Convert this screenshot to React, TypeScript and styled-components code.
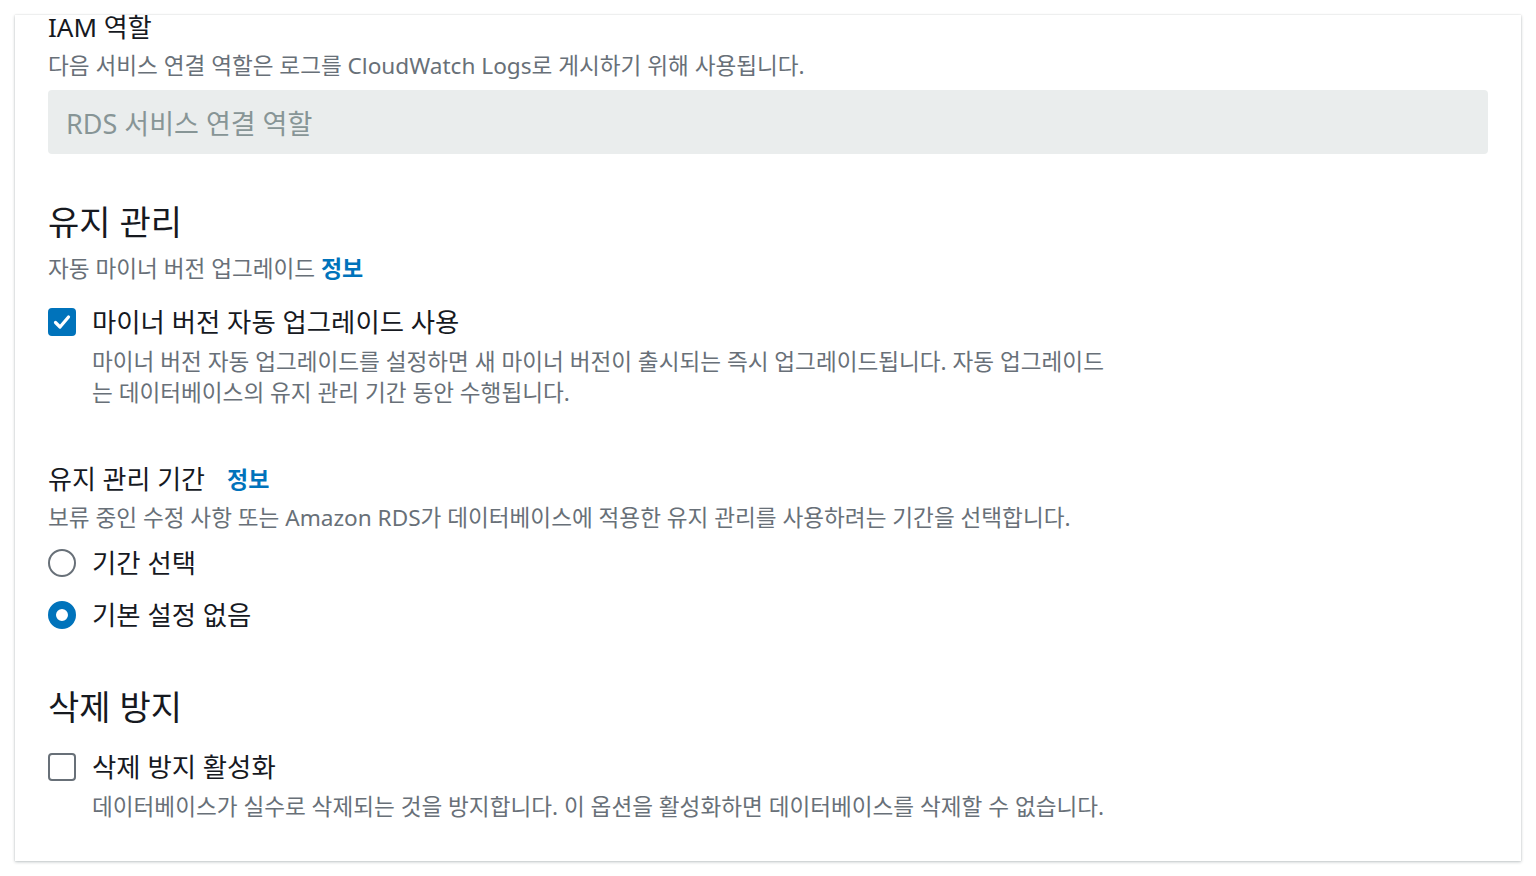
import React from 'react';
import styled, { createGlobalStyle } from 'styled-components';

const GlobalStyle = createGlobalStyle`
  html, body {
    margin: 0;
    padding: 0;
    background: #ffffff;
    font-family: "Noto Sans", "Noto Sans CJK KR", sans-serif;
    color: #16191f;
  }
`;

const Page = styled.div`
  padding: 15px;
  height: 876px;
  box-sizing: border-box;
  overflow: hidden;
`;

const Card = styled.div`
  background: #ffffff;
  box-shadow: 0 1px 3px rgba(0, 28, 36, 0.25), 0 0 1px rgba(0, 28, 36, 0.15);
  padding: 0 33px 36px 33px;
  height: 846px;
  box-sizing: border-box;
  display: flex;
  flex-direction: column;
`;

const Label = styled.div<{ gap?: number }>`
  font-size: 26px;
  line-height: 32px;
  display: flex;
  align-items: center;
  gap: ${(p) => p.gap ?? 8}px;
`;

const Desc = styled.div`
  font-size: 22.6px;
  line-height: 31px;
  color: #687078;
`;

const InfoLink = styled.a`
  color: #0073bb;
  font-weight: 700;
  font-size: 23px;
  text-decoration: none;
`;

const Input = styled.div`
  margin-top: 9px;
  height: 64px;
  background: #eaeded;
  border-radius: 4px;
  display: flex;
  align-items: center;
  padding: 0 18px;
  font-size: 27px;
  color: #879596;
`;

const Heading = styled.h2`
  margin: 0;
  font-size: 34px;
  line-height: 44px;
  font-weight: 400;
`;

const Section = styled.div<{ top: number }>`
  margin-top: ${(p) => p.top}px;
  display: flex;
  flex-direction: column;
`;

const OptionRow = styled.div`
  display: grid;
  grid-template-columns: 28px 1fr;
  column-gap: 16px;
  align-items: center;
`;

const OptionText = styled.div`
  font-size: 26.4px;
  line-height: 32px;
`;

const OptionDesc = styled(Desc)`
  grid-column: 2;
  max-width: 1022px;
`;

const Box = styled.span<{ checked?: boolean }>`
  width: 28px;
  height: 28px;
  box-sizing: border-box;
  border-radius: 4px;
  border: 2px solid ${(p) => (p.checked ? '#0073bb' : '#687078')};
  background: ${(p) => (p.checked ? '#0073bb' : '#ffffff')};
  display: flex;
  align-items: center;
  justify-content: center;
`;

const Radio = styled.span<{ checked?: boolean }>`
  width: 28px;
  height: 28px;
  box-sizing: border-box;
  border-radius: 50%;
  border: ${(p) => (p.checked ? '8px solid #0073bb' : '2px solid #687078')};
  background: #ffffff;
`;

const Checkbox = ({ checked }: { checked?: boolean }) => (
  <Box checked={checked}>
    {checked && (
      <svg width="20" height="20" viewBox="0 0 20 20">
        <path d="M3.5 10.5 L8 15 L16.5 5" fill="none" stroke="#fff" strokeWidth="3.2" strokeLinecap="round" strokeLinejoin="round" />
      </svg>
    )}
  </Box>
);

const App = () => (
  <Page>
    <GlobalStyle />
    <Card>
      <Section top={-4}>
        <Label>IAM 역할</Label>
        <Desc style={{ marginTop: 7 }}>다음 서비스 연결 역할은 로그를 CloudWatch Logs로 게시하기 위해 사용됩니다.</Desc>
        <Input>RDS 서비스 연결 역할</Input>
      </Section>

      <Section top={46}>
        <Heading>유지 관리</Heading>
        <Desc style={{ marginTop: 9 }}>
          자동 마이너 버전 업그레이드 <InfoLink href="#">정보</InfoLink>
        </Desc>
        <OptionRow style={{ marginTop: 22 }}>
          <Checkbox checked />
          <OptionText>마이너 버전 자동 업그레이드 사용</OptionText>
          <OptionDesc style={{ marginTop: 8 }}>
            마이너 버전 자동 업그레이드를 설정하면 새 마이너 버전이 출시되는 즉시 업그레이드됩니다. 자동 업그레이드는 데이터베이스의 유지 관리 기간 동안 수행됩니다.
          </OptionDesc>
        </OptionRow>
      </Section>

      <Section top={55}>
        <Label gap={22}>
          유지 관리 기간 <InfoLink href="#">정보</InfoLink>
        </Label>
        <Desc style={{ marginTop: 7 }}>보류 중인 수정 사항 또는 Amazon RDS가 데이터베이스에 적용한 유지 관리를 사용하려는 기간을 선택합니다.</Desc>
        <OptionRow style={{ marginTop: 14 }}>
          <Radio />
          <OptionText>기간 선택</OptionText>
        </OptionRow>
        <OptionRow style={{ marginTop: 20 }}>
          <Radio checked />
          <OptionText>기본 설정 없음</OptionText>
        </OptionRow>
      </Section>

      <Section top={54}>
        <Heading>삭제 방지</Heading>
        <OptionRow style={{ marginTop: 22 }}>
          <Checkbox />
          <OptionText>삭제 방지 활성화</OptionText>
          <OptionDesc style={{ marginTop: 8 }}>
            데이터베이스가 실수로 삭제되는 것을 방지합니다. 이 옵션을 활성화하면 데이터베이스를 삭제할 수 없습니다.
          </OptionDesc>
        </OptionRow>
      </Section>
    </Card>
  </Page>
);

export default App;
